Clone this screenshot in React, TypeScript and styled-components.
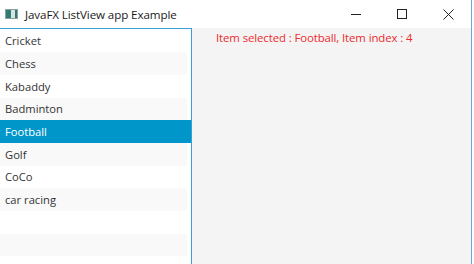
import React from "react";
import styled, { createGlobalStyle } from "styled-components";

const Global = createGlobalStyle`
  html, body { margin: 0; padding: 0; background: #d9d9d9; }
  body { font-family: "Open Sans", "Noto Sans", sans-serif; }
`;

const Window = styled.div`
  width: 474px;
  height: 264px;
  display: flex;
  flex-direction: column;
  overflow: hidden;
  background: #ffffff;
`;

const TitleBar = styled.div`
  height: 28px;
  display: flex;
  align-items: center;
  background: #ffffff;
  flex-shrink: 0;
  border-right: 1px solid #6ea5d8;
  margin-right: 2px;
`;

const AppIcon = styled.div`
  width: 13px;
  height: 10px;
  margin-left: 5px;
  margin-right: 7px;
  display: flex;
  border: 1px solid #8aa3a0;
  box-sizing: border-box;
`;

const IconPart = styled.div<{ $c: string; $w: number }>`
  width: ${(p) => p.$w}px;
  background: ${(p) => p.$c};
`;

const Title = styled.span`
  font-size: 11.6px;
  color: #1a1a1a;
  flex: 1;
  letter-spacing: -0.1px;
`;

const Controls = styled.div`
  display: flex;
  height: 100%;
`;

const Ctrl = styled.div`
  width: 46px;
  height: 100%;
  display: flex;
  align-items: center;
  justify-content: center;
`;

const Body = styled.div`
  flex: 1;
  display: flex;
  min-height: 0;
  border-right: 1px solid #6ea5d8;
  margin-right: 2px;
`;

const List = styled.div`
  width: 191px;
  border-top: 1.5px solid #3a9fd6;
  border-right: 1.5px solid #3a9fd6;
  background: #ffffff;
  display: flex;
  flex-direction: column;
  padding-top: 0.5px;
  overflow: hidden;
`;

const Row = styled.div<{ $odd: boolean; $sel: boolean }>`
  height: 22.7px;
  flex-shrink: 0;
  display: flex;
  align-items: center;
  padding-left: 5px;
  font-size: 11.2px;
  color: ${(p) => (p.$sel ? "#ffffff" : "#333333")};
  background: ${(p) => (p.$sel ? "#0096c9" : p.$odd ? "#f9f9f9" : "#ffffff")};
  margin-right: ${(p) => (p.$sel ? "0" : "4px")};
`;

const Panel = styled.div`
  flex: 1;
  background: #f4f4f4;
  padding: 2px 0 0 24px;
`;

const Label = styled.div`
  font-size: 11.4px;
  color: #ee2a2e;
  letter-spacing: -0.1px;
`;

const items = ["Cricket", "Chess", "Kabaddy", "Badminton", "Football", "Golf", "CoCo", "car racing", "", "", ""];

export default function App() {
  return (
    <Window>
      <Global />
      <TitleBar>
        <AppIcon>
          <IconPart $c="#2f7a72" $w={5} />
          <IconPart $c="#d8e6e2" $w={4} />
          <IconPart $c="#2f7a72" $w={2} />
        </AppIcon>
        <Title>JavaFX ListView app Example</Title>
        <Controls>
          <Ctrl>
            <svg width="10" height="10" viewBox="0 0 10 10">
              <line x1="0" y1="5.5" x2="10" y2="5.5" stroke="#222" strokeWidth="1" />
            </svg>
          </Ctrl>
          <Ctrl>
            <svg width="10" height="10" viewBox="0 0 10 10">
              <rect x="0.5" y="0.5" width="9" height="9" fill="none" stroke="#222" strokeWidth="1" />
            </svg>
          </Ctrl>
          <Ctrl>
            <svg width="11" height="11" viewBox="0 0 11 11">
              <path d="M0.5 0.5 L10.5 10.5 M10.5 0.5 L0.5 10.5" stroke="#222" strokeWidth="1" />
            </svg>
          </Ctrl>
        </Controls>
      </TitleBar>
      <Body>
        <List>
          {items.map((it, i) => (
            <Row key={i} $odd={i % 2 === 1} $sel={i === 4}>
              {it}
            </Row>
          ))}
        </List>
        <Panel>
          <Label>Item selected : Football, Item index : 4</Label>
        </Panel>
      </Body>
    </Window>
  );
}
